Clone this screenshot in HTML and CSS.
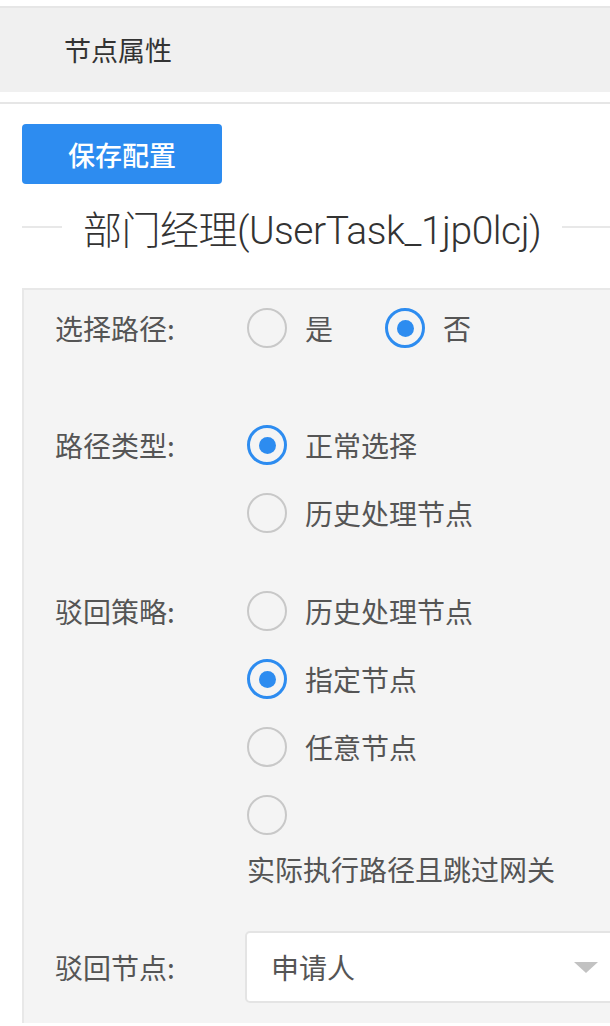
FILE: index.html
```html
<!DOCTYPE html>
<html lang="zh-CN">
<head>
    <meta charset="UTF-8">
    <meta name="viewport" content="width=device-width, initial-scale=1.0">
    <title>节点属性</title>
    <link rel="stylesheet" href="styles.css">
</head>
<body>
    <div class="topbar">节点属性</div>
    <div class="split"></div>

    <div class="toolbar">
        <button class="btn-save">保存配置</button>
    </div>

    <div class="divider">
        <span class="divider-line short"></span>
        <span class="divider-text">部门经理(UserTask_1jp0lcj)</span>
        <span class="divider-line"></span>
    </div>

    <div class="panel">
        <div class="form-item first">
            <div class="label">选择路径:</div>
            <div class="options inline">
                <label class="radio"><span class="circle"></span><span class="text">是</span></label>
                <label class="radio checked"><span class="circle"></span><span class="text">否</span></label>
            </div>
        </div>

        <div class="form-item">
            <div class="label">路径类型:</div>
            <div class="options">
                <label class="radio checked"><span class="circle"></span><span class="text">正常选择</span></label>
                <label class="radio"><span class="circle"></span><span class="text">历史处理节点</span></label>
            </div>
        </div>

        <div class="form-item">
            <div class="label">驳回策略:</div>
            <div class="options">
                <label class="radio"><span class="circle"></span><span class="text">历史处理节点</span></label>
                <label class="radio checked"><span class="circle"></span><span class="text">指定节点</span></label>
                <label class="radio"><span class="circle"></span><span class="text">任意节点</span></label>
                <label class="radio wrap"><span class="circle"></span></label>
                <div class="wrap-text">实际执行路径且跳过网关</div>
            </div>
        </div>

        <div class="form-item select-row">
            <div class="label">驳回节点:</div>
            <div class="select">
                <span>申请人</span>
                <span class="arrow"></span>
            </div>
        </div>
    </div>
</body>
</html>
```

FILE: styles.css
```css
html, body {
    overflow: hidden;
}

body {
    margin: 0;
    background-color: #fff;
    font-family: "Noto Sans CJK SC", "Liberation Sans", sans-serif;
    color: #333;
}

.topbar {
    margin-top: 6px;
    border-top: 2px solid #e6e6e6;
    height: 84px;
    line-height: 84px;
    background-color: #f0f0f0;
    padding-left: 64px;
    font-size: 27px;
    color: #333;
}

.split {
    margin-top: 10px;
    border-top: 2px solid #e6e6e6;
}

.toolbar {
    padding: 20px 22px 0;
}

.btn-save {
    width: 200px;
    height: 60px;
    border: none;
    border-radius: 4px;
    background-color: #2d8cf0;
    color: #fff;
    font-family: inherit;
    font-size: 27px;
    font-weight: 500;
    cursor: pointer;
}

.divider {
    display: flex;
    align-items: center;
    height: 86px;
    padding-left: 22px;
}

.divider-line {
    flex: 1;
    border-top: 2px solid #e8e8e8;
}

.divider-line.short {
    flex: none;
    width: 40px;
}

.divider-text {
    padding: 0 21px;
    font-family: "Roboto", "Noto Sans CJK SC", sans-serif;
    font-size: 39px;
    font-weight: 300;
    letter-spacing: -0.5px;
    color: #333;
    white-space: nowrap;
}

.panel {
    margin-left: 22px;
    margin-top: 18px;
    border-top: 2px solid #e8e8e8;
    border-left: 2px solid #e8e8e8;
    background-color: #f4f4f4;
    padding: 4px 0 20px 31px;
    font-size: 28px;
    color: #555;
}

.form-item {
    display: flex;
    margin-bottom: 30px;
}

.form-item.first {
    margin-bottom: 49px;
}

.label {
    width: 192px;
    flex: none;
    line-height: 68px;
}

.options.inline {
    display: flex;
    gap: 52px;
}

.radio {
    display: flex;
    align-items: center;
    height: 68px;
}

.circle {
    box-sizing: border-box;
    width: 40px;
    height: 40px;
    border: 2px solid #c8c8c8;
    border-radius: 50%;
    display: flex;
    align-items: center;
    justify-content: center;
}

.radio.checked .circle {
    border: 3px solid #2d8cf0;
}

.radio.checked .circle::after {
    content: "";
    width: 17px;
    height: 17px;
    border-radius: 50%;
    background-color: #2d8cf0;
}

.radio .text {
    margin-left: 18px;
}

.wrap-text {
    line-height: 40px;
    margin-bottom: 12px;
}

.select-row {
    align-items: center;
    margin-bottom: 0;
}

.select {
    box-sizing: border-box;
    flex: none;
    width: 440px;
    height: 72px;
    margin-left: -2px;
    display: flex;
    align-items: center;
    justify-content: space-between;
    padding: 0 85px 0 24px;
    background-color: #fff;
    border: 2px solid #e4e4e4;
    border-radius: 5px;
    color: #555;
}

.arrow {
    width: 0;
    height: 0;
    border-left: 12px solid transparent;
    border-right: 12px solid transparent;
    border-top: 11px solid #c2c2c2;
}
```
